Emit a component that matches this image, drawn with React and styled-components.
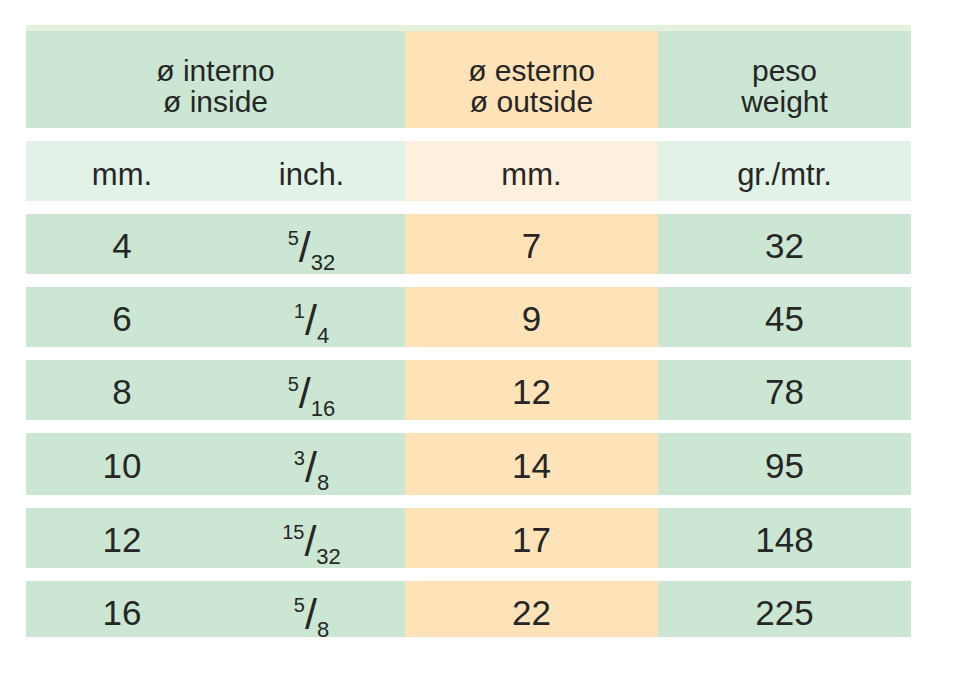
import styled, { createGlobalStyle } from "styled-components";

const GlobalStyle = createGlobalStyle`
  body {
    margin: 0;
    background: #ffffff;
    font-family: "Liberation Sans", Arial, sans-serif;
    color: #262626;
  }
`;

const Page = styled.div`
  padding: 25px 0 0 26px;
`;

const Table = styled.div`
  width: 885px;
  display: flex;
  flex-direction: column;
  gap: 13px;
`;

const Row = styled.div`
  display: grid;
  grid-template-columns: 192px 187px 253px 253px;
  box-sizing: border-box;
  height: ${(p) => p.$height || 60}px;
  border-top: ${(p) => (p.$band ? "6px solid #e4f1dc" : "none")};
`;

const palette = {
  green: "#cce6d4",
  orange: "#fee3b9",
  paleGreen: "#e3f2e6",
  paleOrange: "#fef0dc",
};

const Cell = styled.div`
  grid-column: span ${(p) => p.$span || 1};
  background: ${(p) => palette[p.$tone]};
  display: flex;
  align-items: center;
  justify-content: center;
  text-align: center;
  font-size: ${(p) => p.$size || 35}px;
  line-height: 1;
  padding-top: ${(p) => p.$offset || 0}px;
`;

const HeadText = styled.div`
  font-size: 30px;
  line-height: 31px;
`;

const Fraction = styled.span`
  display: inline-flex;
  align-items: stretch;
  height: 46px;
  margin-top: 14px;
`;

const Num = styled.span`
  align-self: flex-start;
  font-size: 20px;
  line-height: 1;
`;

const Slash = styled.span`
  align-self: flex-start;
  font-size: 43px;
  line-height: 38px;
`;

const Den = styled.span`
  align-self: flex-end;
  font-size: 22px;
  line-height: 1;
`;

const rows = [
  { mm: 4, n: 5, d: 32, out: 7, w: 32, h: 60 },
  { mm: 6, n: 1, d: 4, out: 9, w: 45, h: 60 },
  { mm: 8, n: 5, d: 16, out: 12, w: 78, h: 60 },
  { mm: 10, n: 3, d: 8, out: 14, w: 95, h: 62 },
  { mm: 12, n: 15, d: 32, out: 17, w: 148, h: 60 },
  { mm: 16, n: 5, d: 8, out: 22, w: 225, h: 56 },
];

export default function App() {
  return (
    <Page>
      <GlobalStyle />
      <Table>
        <Row $height={103} $band>
          <Cell $tone="green" $span={2} $offset={12}>
            <HeadText>
              ø interno
              <br />ø inside
            </HeadText>
          </Cell>
          <Cell $tone="orange" $offset={12}>
            <HeadText>
              ø esterno
              <br />ø outside
            </HeadText>
          </Cell>
          <Cell $tone="green" $offset={12}>
            <HeadText>
              peso
              <br />
              weight
            </HeadText>
          </Cell>
        </Row>
        <Row>
          <Cell $tone="paleGreen" $size={31} $offset={6}>mm.</Cell>
          <Cell $tone="paleGreen" $size={31} $offset={6}>inch.</Cell>
          <Cell $tone="paleOrange" $size={31} $offset={6}>mm.</Cell>
          <Cell $tone="paleGreen" $size={31} $offset={6}>gr./mtr.</Cell>
        </Row>
        {rows.map((r) => (
          <Row key={r.mm} $height={r.h}>
            <Cell $tone="green" $offset={2}>{r.mm}</Cell>
            <Cell $tone="green">
              <Fraction>
                <Num>{r.n}</Num>
                <Slash>/</Slash>
                <Den>{r.d}</Den>
              </Fraction>
            </Cell>
            <Cell $tone="orange" $offset={2}>{r.out}</Cell>
            <Cell $tone="green" $offset={2}>{r.w}</Cell>
          </Row>
        ))}
      </Table>
    </Page>
  );
}
